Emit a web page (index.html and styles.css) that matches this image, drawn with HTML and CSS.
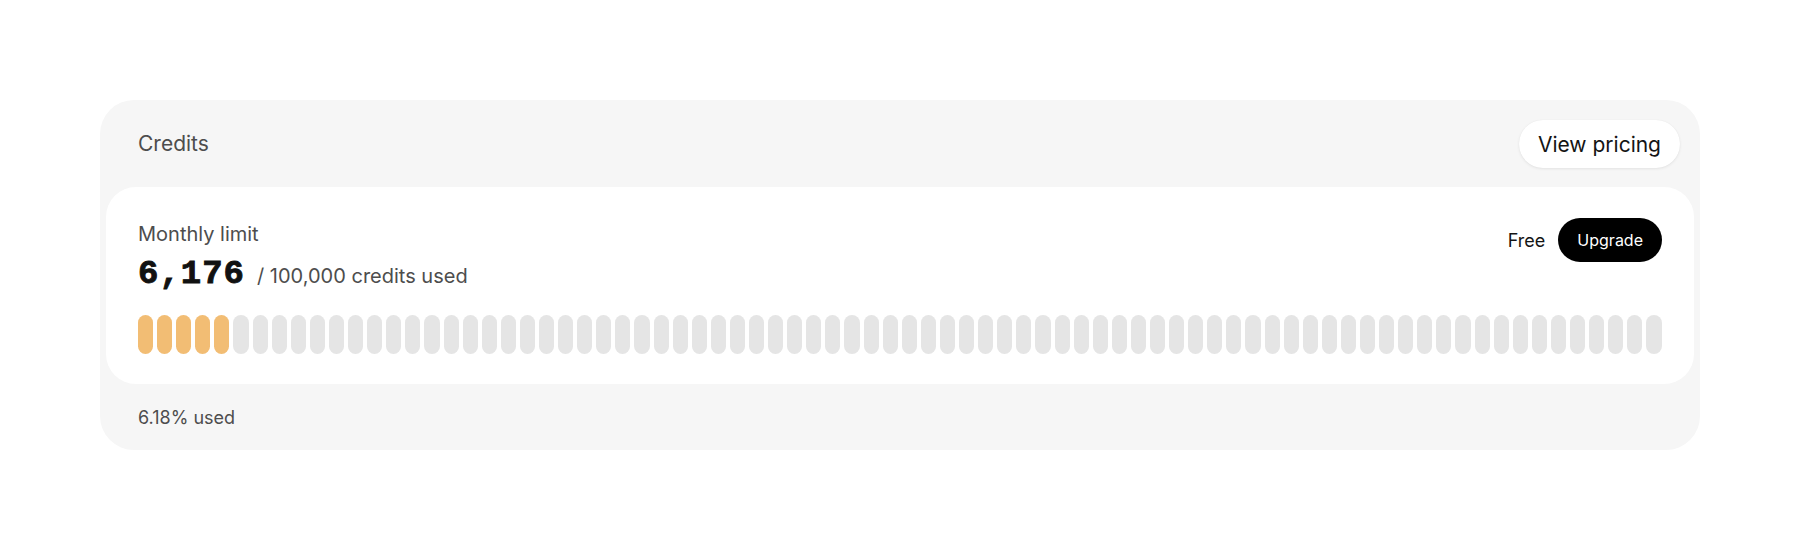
FILE: index.html
```html
<!DOCTYPE html>
<html lang="en">
<head>
<meta charset="utf-8">
<title>Credits</title>
<link rel="stylesheet" href="styles.css">
</head>
<body>
<main class="page">
  <section class="credits">
    <header class="credits-header">
      <h2 class="credits-title">Credits</h2>
      <button class="btn-pricing" type="button">View pricing</button>
    </header>
    <div class="usage-card">
      <div class="usage-top">
        <div class="usage-info">
          <div class="usage-label">Monthly limit</div>
          <div class="usage-amount"><span class="amount-num">6,176</span><span class="amount-total">/ 100,000 credits used</span></div>
        </div>
        <div class="plan">
          <span class="plan-name">Free</span>
          <button class="btn-upgrade" type="button">Upgrade</button>
        </div>
      </div>
      <div class="bars" id="bars"></div>
    </div>
    <footer class="credits-footer">6.18% used</footer>
  </section>
</main>
<script src="script.js"></script>
</body>
</html>
```

FILE: script.js
```js
(function () {
  var total = 80;
  var used = Math.round(total * 0.0618);
  var wrap = document.getElementById('bars');
  for (var i = 0; i < total; i++) {
    var b = document.createElement('span');
    b.className = 'bar' + (i < used ? ' bar-used' : '');
    wrap.appendChild(b);
  }
})();
```

FILE: styles.css
```css
* { box-sizing: border-box; }

html, body {
  margin: 0;
  padding: 0;
  background: #ffffff;
}

body {
  font-family: Inter, "Noto Sans", "Liberation Sans", sans-serif;
  color: #111111;
}

.page {
  padding-top: 100px;
}

.credits {
  width: 1600px;
  margin: 0 auto;
  background: #f6f6f6;
  border-radius: 34px;
}

.credits-header {
  display: flex;
  align-items: center;
  justify-content: space-between;
  padding: 20px 20px 19px 38px;
}

.credits-title {
  margin: 0;
  font-size: 21px;
  font-weight: 400;
  line-height: 28px;
  color: #4d4d4d;
}

.btn-pricing {
  height: 48px;
  padding: 0 19px;
  border: none;
  border-radius: 24px;
  background: #ffffff;
  box-shadow: 0 1px 3px rgba(0, 0, 0, 0.08), 0 0 1px rgba(0, 0, 0, 0.06);
  font-family: inherit;
  font-size: 21px;
  font-weight: 400;
  color: #141414;
  cursor: pointer;
}

.usage-card {
  margin: 0 6px;
  background: #ffffff;
  border-radius: 30px;
  padding: 31px 32px 30px;
}

.usage-top {
  display: flex;
  justify-content: space-between;
  align-items: flex-start;
}

.usage-label {
  margin-top: 2px;
  font-size: 20px;
  line-height: 28px;
  color: #4d4d4d;
}

.usage-amount {
  margin-top: 8px;
  display: flex;
  align-items: baseline;
  line-height: 36px;
}

.amount-num {
  font-family: "Liberation Mono", "DejaVu Sans Mono", monospace;
  font-weight: 700;
  font-size: 34px;
  letter-spacing: 1px;
  color: #111111;
  -webkit-text-stroke: 0.9px #111111;
}

.amount-total {
  margin-left: 12px;
  font-size: 20px;
  color: #4d4d4d;
}

.plan {
  display: flex;
  align-items: center;
  gap: 13px;
}

.plan-name {
  font-size: 18px;
  color: #141414;
}

.btn-upgrade {
  height: 44px;
  padding: 0 19px;
  border: none;
  border-radius: 22px;
  background: #000000;
  color: #ffffff;
  font-family: inherit;
  font-size: 16px;
  font-weight: 400;
  cursor: pointer;
}

.bars {
  display: flex;
  gap: 4px;
  height: 39px;
  margin-top: 21px;
}

.bar {
  flex: 1 1 0;
  border-radius: 8px;
  background: #e5e5e5;
}

.bar-used {
  background: #f2bd74;
}

.credits-footer {
  padding: 22px 38px 20px;
  font-size: 18px;
  line-height: 24px;
  color: #4d4d4d;
}
```
